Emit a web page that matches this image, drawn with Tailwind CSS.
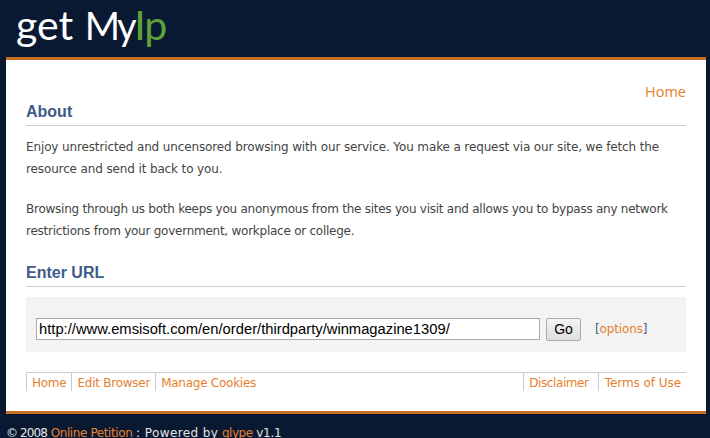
<!DOCTYPE html>
<html><head><meta charset="utf-8"><script src="https://cdn.jsdelivr.net/npm/@tailwindcss/browser@4"></script></head>
<body class="m-0 h-[438px] w-[710px] overflow-hidden bg-[#0a1932] font-['DejaVu_Sans',sans-serif] text-[12px] tracking-[-0.13px] text-[#444]">
<header class="h-[57px] pl-[16px]">
  <div class="flex h-[49px] items-center font-['Lato',sans-serif] text-[41px] leading-none tracking-normal text-white">
    <span class="whitespace-pre">get </span><span class="ml-[1px] text-[38px] tracking-[-2.5px]">My</span><span class="tracking-[-1px] text-[#5ea33a]">Ip</span>
  </div>
</header>
<main class="ml-[6px] h-[357px] w-[700px] border-y-[3px] border-[#c76f25] bg-white px-[20px]">
  <nav class="pt-[22px] text-right font-['Open_Sans',sans-serif] text-[14.5px] leading-[20px] tracking-normal text-[#e5802d]"><a>Home</a></nav>
  <h2 class="mt-[-1px] border-b border-[#ccc] pt-[1px] pb-[3px] font-['Liberation_Sans',sans-serif] text-[16px] leading-[20px] font-bold tracking-normal text-[#405a8a]">About</h2>
  <div class="leading-[22px]">
    <p class="mt-[10px]">Enjoy unrestricted and uncensored browsing with our service. You make a request via our site, we fetch the resource and send it back to you.</p>
    <p class="mt-[18px] tracking-[-0.25px]">Browsing through us both keeps you anonymous from the sites you visit and allows you to bypass any network restrictions from your government, workplace or college.</p>
  </div>
  <h2 class="mt-[20px] border-b border-[#ccc] pt-[1px] pb-[3px] font-['Liberation_Sans',sans-serif] text-[16px] leading-[20px] font-bold tracking-normal text-[#405a8a]">Enter URL</h2>
  <form class="mt-[10px] flex h-[55px] items-center bg-[#f3f3f3] pt-[9px] pl-[10px]">
    <input class="h-[22px] w-[504px] border border-[#aaa] bg-white px-[2px] font-['Liberation_Sans',sans-serif] text-[14.75px] tracking-normal text-black" value="http://www.emsisoft.com/en/order/thirdparty/winmagazine1309/">
    <button type="button" class="ml-[6px] h-[23px] w-[35px] rounded-[2px] border border-[#aaa] bg-gradient-to-b from-[#f4f4f4] to-[#dedede] font-['Liberation_Sans',sans-serif] text-[14px] tracking-normal text-black">Go</button>
    <span class="ml-[14px] text-[#405a8a]">[<a class="text-[#e5802d]">options</a>]</span>
  </form>
  <div class="mt-[20px] flex h-[19px] items-start justify-between border-t border-[#ccc] leading-[21px] text-[#e5802d]">
    <div class="flex h-full tracking-[-0.25px]">
      <a class="h-full border-l border-[#ccc] px-[5px]">Home</a>
      <a class="h-full border-l border-[#ccc] px-[5px]">Edit Browser</a>
      <a class="h-full border-l border-[#ccc] px-[5px]">Manage Cookies</a>
    </div>
    <div class="flex h-full">
      <a class="h-full border-l border-[#ccc] pr-[9px] pl-[5px] tracking-[-0.4px]">Disclaimer</a>
      <a class="h-full border-l border-[#ccc] pr-[5px] pl-[6px] tracking-[-0.05px]">Terms of Use</a>
    </div>
  </div>
</main>
<footer class="pl-[6px] pt-[11px] leading-[16px] text-[#e4e4e4]"><span class="tracking-[-0.9px]">© 2008</span> <a class="tracking-[-0.4px] text-[#e5802d]">Online Petition</a> <span class="tracking-[0.4px]">: Powered by</span> <a class="tracking-[-0.5px] text-[#e5802d]">glype</a> <span class="tracking-[-0.3px]">v1.1</span></footer>
</body></html>
